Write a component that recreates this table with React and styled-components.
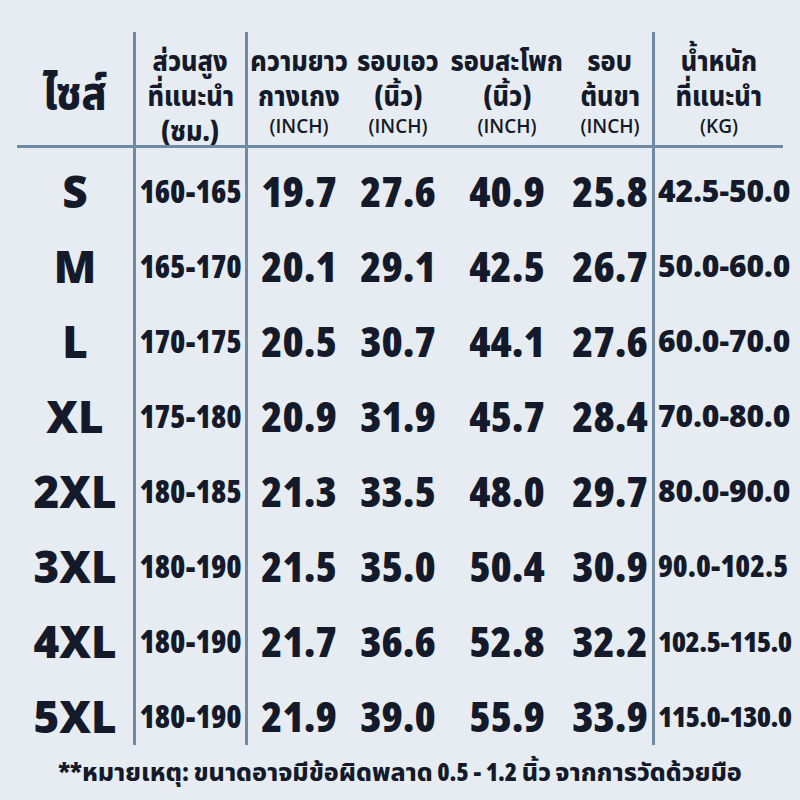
import React from 'react';
import styled, { createGlobalStyle } from 'styled-components';

const Global = createGlobalStyle`
  html, body { margin: 0; padding: 0; background: #e6ecf2; }
  body {
    font-family: "Open Sans", "Noto Sans Thai", "Noto Sans", "DejaVu Sans", sans-serif;
    color: #141a29;
    font-weight: 800;
  }
`;

const LINE = '#6f8ba3';

const Page = styled.div`
  width: 800px;
  height: 800px;
  box-sizing: border-box;
  padding: 32px 17px 0;
  display: flex;
  flex-direction: column;
  background: #e6ecf2;
  overflow: hidden;
`;

const Table = styled.div`
  display: grid;
  grid-template-columns: 116px 112px 105px 96px 122px 84px 131px;
  grid-template-rows: 116px 80px repeat(6, 75px) 67px;
`;

const HeadCell = styled.div`
  box-sizing: border-box;
  border-bottom: 3px solid ${LINE};
  border-left: ${p => (p.$divider ? `3px solid ${LINE}` : 'none')};
  display: flex;
  flex-direction: column;
  align-items: center;
  justify-content: ${p => (p.$center ? 'center' : 'flex-start')};
  padding-top: ${p => (p.$center ? 4 : 10)}px;
  white-space: nowrap;
`;

const SizeTitle = styled.div`
  font-size: 46px;
  line-height: 50px;
  transform: scaleX(0.9);
`;

const HeadLine = styled.div`
  font-size: 29px;
  line-height: 35px;
  transform: scaleX(0.87);
`;

const UnitLine = styled.div`
  font-size: 19px;
  line-height: 28px;
  font-weight: 600;
  font-stretch: 88%;
`;

const Cell = styled.div`
  box-sizing: border-box;
  border-left: ${p => (p.$divider ? `3px solid ${LINE}` : 'none')};
  padding-top: ${p => p.$pt}px;
  padding-left: ${p => (p.$start ? 3 : 0)}px;
  display: flex;
  align-items: center;
  justify-content: ${p => (p.$start ? 'flex-start' : 'center')};
  white-space: nowrap;
  font-size: ${p => p.$size}px;
  font-stretch: ${p => p.$stretch}%;
  letter-spacing: ${p => p.$ls || 0}px;
`;

const Footer = styled.div`
  height: 56px;
  display: flex;
  align-items: center;
  justify-content: center;
  font-size: 25px;
  font-stretch: 80%;
  white-space: nowrap;
`;

const rows = [
  ['S', '160-165', '19.7', '27.6', '40.9', '25.8', '42.5-50.0'],
  ['M', '165-170', '20.1', '29.1', '42.5', '26.7', '50.0-60.0'],
  ['L', '170-175', '20.5', '30.7', '44.1', '27.6', '60.0-70.0'],
  ['XL', '175-180', '20.9', '31.9', '45.7', '28.4', '70.0-80.0'],
  ['2XL', '180-185', '21.3', '33.5', '48.0', '29.7', '80.0-90.0'],
  ['3XL', '180-190', '21.5', '35.0', '50.4', '30.9', '90.0-102.5'],
  ['4XL', '180-190', '21.7', '36.6', '52.8', '32.2', '102.5-115.0'],
  ['5XL', '180-190', '21.9', '39.0', '55.9', '33.9', '115.0-130.0'],
];

const headers = [
  { lines: ['ส่วนสูง', 'ที่แนะนำ', '(ซม.)'], divider: true },
  { lines: ['ความยาว', 'กางเกง'], unit: '(INCH)', divider: true },
  { lines: ['รอบเอว', '(นิ้ว)'], unit: '(INCH)' },
  { lines: ['รอบสะโพก', '(นิ้ว)'], unit: '(INCH)' },
  { lines: ['รอบ', 'ต้นขา'], unit: '(INCH)' },
  { lines: ['น้ำหนัก', 'ที่แนะนำ'], unit: '(KG)', divider: true },
];

const dividerCols = [1, 2, 6];

function cellStyle(ci, value) {
  if (ci === 0) return { size: 44, stretch: 90 };
  if (ci === 1) return { size: 31, stretch: 85 };
  if (ci === 6) {
    if (value.length >= 11) return { size: 29, stretch: 75, ls: -0.6, start: true };
    if (value.length === 10) return { size: 30, stretch: 79, start: true };
    return { size: 30, stretch: 90, start: true };
  }
  return { size: 43, stretch: 84 };
}

export default function App() {
  return (
    <>
      <Global />
      <Page>
        <Table>
          <HeadCell $center>
            <SizeTitle>ไซส์</SizeTitle>
          </HeadCell>
          {headers.map((h, i) => (
            <HeadCell key={i} $divider={h.divider}>
              {h.lines.map((l, j) => (
                <HeadLine key={j}>{l}</HeadLine>
              ))}
              {h.unit && <UnitLine>{h.unit}</UnitLine>}
            </HeadCell>
          ))}
          {rows.map((r, ri) =>
            r.map((v, ci) => {
              const s = cellStyle(ci, v);
              const pt = ri === 0 ? 5 : ri === rows.length - 1 ? 8 : 0;
              return (
                <Cell
                  key={`${ri}-${ci}`}
                  $divider={dividerCols.includes(ci)}
                  $pt={pt}
                  $size={s.size}
                  $stretch={s.stretch}
                  $ls={s.ls}
                  $start={s.start}
                >
                  {v}
                </Cell>
              );
            })
          )}
        </Table>
        <Footer>**หมายเหตุ: ขนาดอาจมีข้อผิดพลาด 0.5 - 1.2 นิ้ว จากการวัดด้วยมือ</Footer>
      </Page>
    </>
  );
}
